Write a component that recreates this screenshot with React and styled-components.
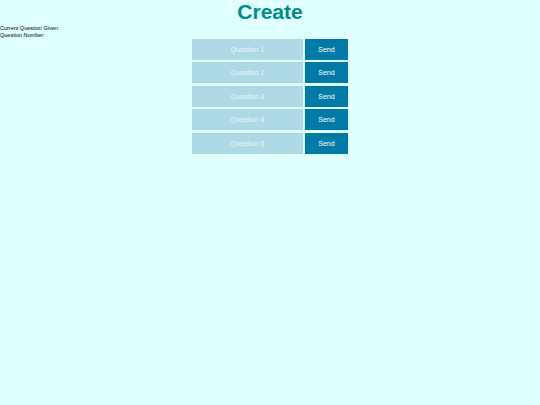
import React from "react";
import styled, { createGlobalStyle } from "styled-components";

const Global = createGlobalStyle`
  html, body { margin: 0; padding: 0; background: #e0ffff; }
  body { font-family: "Liberation Sans", Arial, sans-serif; }
`;

const Page = styled.div`
  display: flex;
  flex-direction: column;
  min-height: 405px;
  background: #e0ffff;
`;

const Title = styled.h1`
  margin: 0;
  padding-bottom: 1px;
  text-align: center;
  font-size: 21px;
  line-height: 24px;
  font-weight: 700;
  color: #008b8b;
`;

const Info = styled.div`
  font-size: 5.5px;
  line-height: 6.5px;
  color: #000;
  padding-bottom: 0.5px;
`;

const List = styled.div`
  display: flex;
  flex-direction: column;
  align-items: center;
  gap: 2.6px;
`;

const Row = styled.div`
  display: flex;
  gap: 2px;
`;

const Button = styled.button`
  border: none;
  margin: 0;
  padding: 0;
  height: 21px;
  width: ${(p) => (p.$send ? "43px" : "111px")};
  background: ${(p) => (p.$send ? "#007ba7" : "#add8e6")};
  color: ${(p) => (p.$send ? "#ffffff" : "#e8f6fa")};
  font-family: "Liberation Sans", Arial, sans-serif;
  font-size: 7px;
  cursor: pointer;
`;

export default function App() {
  const questions = [1, 2, 3, 4, 5];
  return (
    <Page>
      <Global />
      <Title>Create</Title>
      <Info>
        <div>Current Question Given:</div>
        <div>Question Number:</div>
      </Info>
      <List>
        {questions.map((n) => (
          <Row key={n}>
            <Button>Question {n}</Button>
            <Button $send>Send</Button>
          </Row>
        ))}
      </List>
    </Page>
  );
}
